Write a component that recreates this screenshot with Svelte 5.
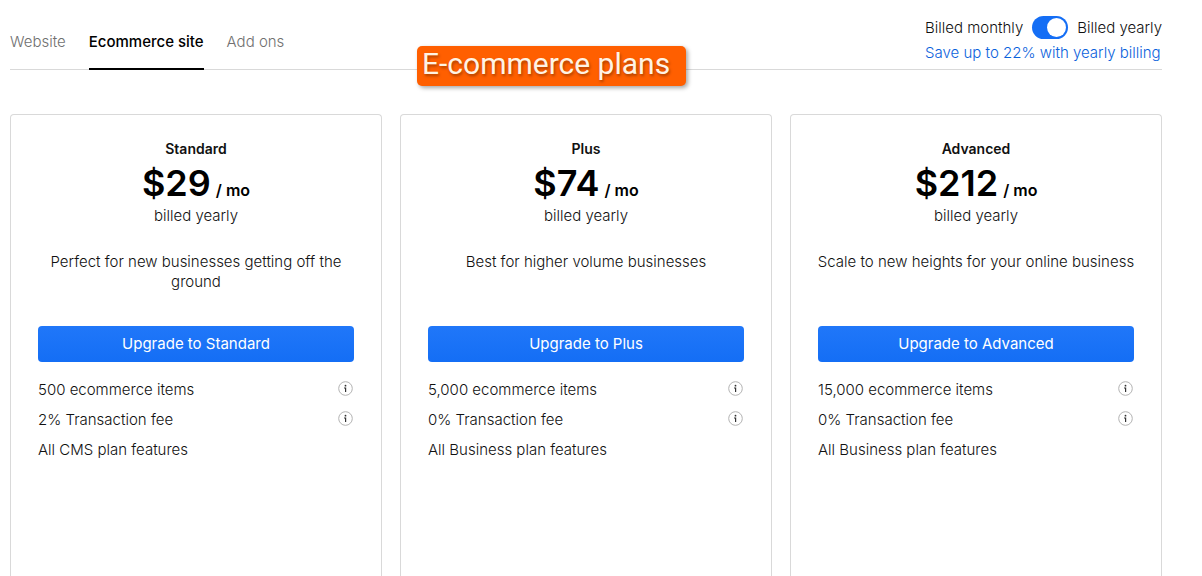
<script>
  let yearly = $state(true);
  let active = $state('Ecommerce site');

  const tabs = ['Website', 'Ecommerce site', 'Add ons'];

  const plans = [
    {
      name: 'Standard',
      price: 29,
      about: 'Perfect for new businesses getting off the ground',
      features: [
        { text: '500 ecommerce items', info: true },
        { text: '2% Transaction fee', info: true },
        { text: 'All CMS plan features' },
      ],
    },
    {
      name: 'Plus',
      price: 74,
      about: 'Best for higher volume businesses',
      features: [
        { text: '5,000 ecommerce items', info: true },
        { text: '0% Transaction fee', info: true },
        { text: 'All Business plan features' },
      ],
    },
    {
      name: 'Advanced',
      price: 212,
      about: 'Scale to new heights for your online business',
      features: [
        { text: '15,000 ecommerce items', info: true },
        { text: '0% Transaction fee', info: true },
        { text: 'All Business plan features' },
      ],
    },
  ];
</script>

<div class="page">
  <header>
    <nav>
      {#each tabs as tab}
        <button class="tab" class:active={active === tab} onclick={() => (active = tab)}>
          {tab}
        </button>
      {/each}
    </nav>
    <div class="billing">
      <div class="switch-row">
        <label for="yearly">Billed monthly</label>
        <input id="yearly" class="switch" type="checkbox" role="switch" bind:checked={yearly} />
        <label for="yearly">Billed yearly</label>
      </div>
      <div class="save">Save up to 22% with yearly billing</div>
    </div>
    <div class="callout">E-commerce plans</div>
  </header>

  <main>
    {#each plans as plan}
      <section class="card">
        <h2>{plan.name}</h2>
        <div class="price">${plan.price}<span class="per">/ mo</span></div>
        <div>billed yearly</div>
        <p class="about">{plan.about}</p>
        <button class="upgrade">Upgrade to {plan.name}</button>
        <ul>
          {#each plan.features as feature}
            <li>
              <span>{feature.text}</span>
              {#if feature.info}
                <button class="info" aria-label="About {feature.text}">
                  <svg width="16" height="16" viewBox="0 0 16 16" fill="none">
                    <circle cx="7.5" cy="8.5" r="6.8" stroke="#b3b3b3" />
                    <circle cx="7.5" cy="5.7" r="0.9" fill="#333" />
                    <path d="M6 8H7.6V12" stroke="#333" stroke-width="1.2" />
                  </svg>
                </button>
              {/if}
            </li>
          {/each}
        </ul>
      </section>
    {/each}
  </main>
</div>

<style>
  :global(body) {
    background: #fff;
  }

  .page {
    box-sizing: border-box;
    display: flex;
    flex-direction: column;
    min-height: 100vh;
    padding: 0 40px 0 10px;
    font-family: Inter, 'Liberation Sans', sans-serif;
    font-size: 15px;
    font-weight: 300;
    line-height: 20px;
    color: #111;
  }

  button {
    padding: 0;
    border: 0;
    background: none;
    font: inherit;
    cursor: pointer;
  }

  header {
    position: relative;
    display: flex;
    justify-content: space-between;
    border-bottom: 1px solid #d9d9d9;
  }

  nav {
    display: flex;
    gap: 23px;
    margin-bottom: -1px;
  }
  .tab {
    padding: 16px 0 0;
    border-bottom: 2px solid transparent;
    color: #707070;
  }
  .tab.active {
    border-color: #000;
    font-weight: 500;
    color: #000;
  }

  .billing {
    padding: 16px 0 6px;
  }
  .switch-row {
    display: flex;
    align-items: center;
    justify-content: space-between;
    gap: 9px;
  }
  .switch {
    appearance: none;
    display: flex;
    box-sizing: border-box;
    width: 36px;
    height: 23px;
    margin: 0;
    padding: 2px;
    border-radius: 12px;
    background: #999;
    cursor: pointer;
  }
  .switch::before {
    content: '';
    width: 19px;
    height: 19px;
    border-radius: 50%;
    background: #fff;
  }
  .switch:checked {
    justify-content: flex-end;
    background: #146ef5;
  }
  .save {
    margin-top: 4px;
    color: #0b62dc;
  }

  /* floats over the header rule */
  .callout {
    position: absolute;
    left: 407px;
    top: 46px;
    box-sizing: border-box;
    width: 269px;
    height: 40px;
    padding-left: 5px;
    border-radius: 5px;
    background: #ff5f00;
    box-shadow: 2px 2px 4px rgba(0, 0, 0, 0.35);
    font-family: Roboto, sans-serif;
    font-size: 30px;
    font-weight: 400;
    line-height: 36px;
    color: #fff3e4;
    text-shadow: 1px 2px 3px rgba(0, 0, 0, 0.35);
    white-space: nowrap;
  }

  main {
    flex: 1;
    display: grid;
    grid-template-columns: repeat(3, 1fr);
    gap: 18px;
    margin-top: 44px;
  }
  .card {
    padding: 24px 27px 0;
    border: 1px solid #d9d9d9;
    border-bottom: 0;
    border-radius: 4px 4px 0 0;
    text-align: center;
  }
  h2 {
    margin: 0 0 4px;
    font-size: 14px;
    font-weight: 600;
  }
  .price {
    margin-bottom: 3px;
    font-size: 36px;
    line-height: 40px;
    font-weight: 600;
    color: #000;
  }
  .per {
    margin-left: 5px;
    font-size: 16px;
    line-height: 20px;
  }
  .about {
    height: 40px;
    margin: 26px -12px 34px;
    padding: 0 8px;
  }
  .upgrade {
    width: 100%;
    height: 36px;
    border-radius: 4px;
    background: linear-gradient(#2077f9, #146ef5);
    font-weight: 400;
    color: #fff;
  }

  ul {
    display: grid;
    gap: 10px;
    margin: 18px 0 0;
    padding: 0;
    list-style: none;
  }
  li {
    display: flex;
    align-items: flex-start;
    justify-content: space-between;
  }
  .info svg {
    display: block;
  }
</style>
